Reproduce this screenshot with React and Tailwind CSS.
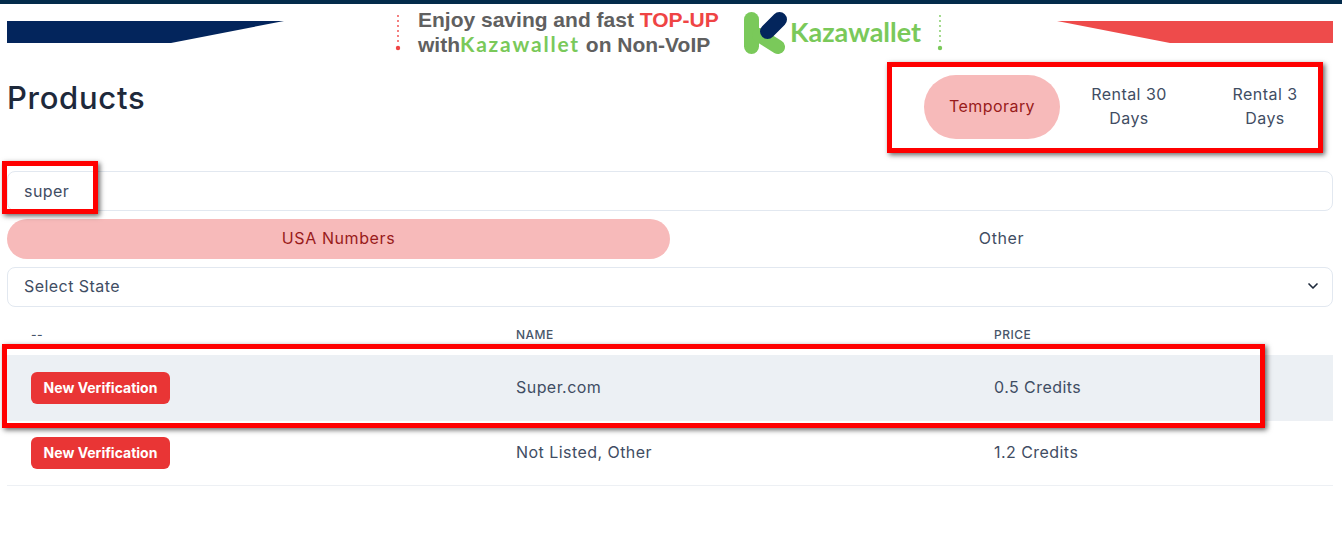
import React from 'react';
import { ChevronDown } from 'lucide-react';

const rows = [
  { name: 'Super.com', price: '0.5 Credits', active: true },
  { name: 'Not Listed, Other', price: '1.2 Credits', active: false },
];

const DottedLine = ({ color }) => (
  <svg width="8" height="38" viewBox="0 0 8 38">
    {[0, 5, 10, 15, 20, 25].map((y) => (
      <circle key={y} cx="4" cy={y + 2} r="0.9" fill={color} />
    ))}
    <circle cx="4" cy="34" r="2.2" fill={color} />
  </svg>
);

const Logo = () => (
  <svg width="44" height="44" viewBox="0 0 44 44">
    <line x1="7.5" y1="8.5" x2="7.5" y2="35.5" stroke="#7ac95a" strokeWidth="15" strokeLinecap="round" />
    <line x1="15" y1="24" x2="34" y2="36" stroke="#7ac95a" strokeWidth="14" strokeLinecap="round" />
    <line x1="23.5" y1="20.5" x2="35.5" y2="8.5" stroke="#03255c" strokeWidth="15" strokeLinecap="round" />
  </svg>
);

const Annotation = ({ className }) => (
  <div className={`absolute border-[5px] border-[#ff0000] shadow-[2px_2px_5px_rgba(0,0,0,0.6)] pointer-events-none ${className}`}></div>
);

const App = () => {
  return (
    <div className="relative h-[534px] overflow-hidden bg-white text-[#3f4d63] font-['Inter',sans-serif]">
      <div className="h-[4px] bg-[#032b4b]"></div>

      <div className="flex justify-between items-start h-[52px] pl-[7px] pr-[9px]">
        <svg className="mt-[17px]" width="277" height="22" viewBox="0 0 277 22">
          <polygon points="0,0 277,0 164,22 0,22" fill="#03255c" />
        </svg>
        <div className="flex items-center mt-[4px] mr-[3px]">
          <DottedLine color="#ef4444" />
          <div className="ml-[16px] w-[326px] font-['Liberation_Sans',sans-serif] font-bold text-[21px] leading-[24px] text-[#606060]">
            <div>Enjoy saving and fast <span className="text-[#ef4444]">TOP-UP</span></div>
            <div>with<span className="font-['Lato',sans-serif] tracking-[1.8px] text-[#7ac95a]">Kazawallet</span> on Non-VoIP</div>
          </div>
          <Logo />
          <span className="ml-[2px] w-[146px] font-['Lato',sans-serif] font-bold text-[27px] text-[#7ac95a]">Kazawallet</span>
          <DottedLine color="#7ac95a" />
        </div>
        <svg className="mt-[17px]" width="276" height="22" viewBox="0 0 276 22">
          <polygon points="0,0 276,0 276,22 113,22" fill="#ee4b4b" />
        </svg>
      </div>

      <div className="pl-[7px] pr-[9px] text-[16px] tracking-[0.45px]">
        <div className="flex justify-between items-start h-[115px]">
          <h1 className="mt-[20px] text-[31px] font-medium tracking-[0.7px] leading-[44px] text-[#1e293b]">Products</h1>
          <div className="flex mt-[19px]">
            <button className="w-[136px] h-[64px] mr-[1px] pb-[2px] rounded-full bg-[#f7baba] text-[#991b1b]">Temporary</button>
            <button className="w-[136px] h-[64px] pb-[2px] leading-[24px] px-[24px]">Rental 30 Days</button>
            <button className="w-[136px] h-[64px] pb-[2px] leading-[24px] px-[30px]">Rental 3 Days</button>
          </div>
        </div>

        <input
          defaultValue="super"
          className="block w-full h-[40px] px-[16px] rounded-lg border border-[#e2e8f0] outline-none"
        />

        <div className="flex mt-[8px] tracking-[0.6px]">
          <button className="flex-1 h-[40px] pb-[2px] rounded-full bg-[#f7baba] text-[#991b1b]">USA Numbers</button>
          <button className="flex-1 h-[40px] pb-[2px] rounded-full">Other</button>
        </div>

        <div className="flex items-center justify-between mt-[8px] h-[40px] pl-[16px] pr-[11px] pb-[2px] rounded-lg border border-[#e2e8f0]">
          <span>Select State</span>
          <ChevronDown size={16} strokeWidth={2.5} className="text-[#1e293b]" />
        </div>

        <table className="w-full mt-[8px] table-fixed text-left">
          <thead>
            <tr className="h-[40px] text-[12px] tracking-[0.5px] text-[#475569]">
              <th className="w-[485px] px-[24px] font-medium">--</th>
              <th className="w-[478px] px-[24px] font-medium">NAME</th>
              <th className="px-[24px] font-medium">PRICE</th>
            </tr>
          </thead>
          <tbody>
            {rows.map((row) => (
              <tr key={row.name} className={`h-[65px] border-b border-[#edf0f4] ${row.active ? 'bg-[#ecf0f4]' : ''}`}>
                <td className={`px-[24px] ${row.active ? 'pt-[1px]' : ''}`}>
                  <button className="block w-[139px] h-[32px] rounded-md bg-[#e93535] text-white text-[14px] tracking-normal font-bold">New Verification</button>
                </td>
                <td className={`px-[24px] ${row.active ? '' : 'pb-[2px]'}`}>{row.name}</td>
                <td className={`px-[24px] ${row.active ? '' : 'pb-[2px]'}`}>{row.price}</td>
              </tr>
            ))}
          </tbody>
        </table>
      </div>

      <Annotation className="left-[887px] top-[62px] w-[436px] h-[91px]" />
      <Annotation className="left-[2px] top-[161px] w-[96px] h-[53px]" />
      <Annotation className="left-[2px] top-[344px] w-[1263px] h-[84px]" />
    </div>
  );
};

export default App;
